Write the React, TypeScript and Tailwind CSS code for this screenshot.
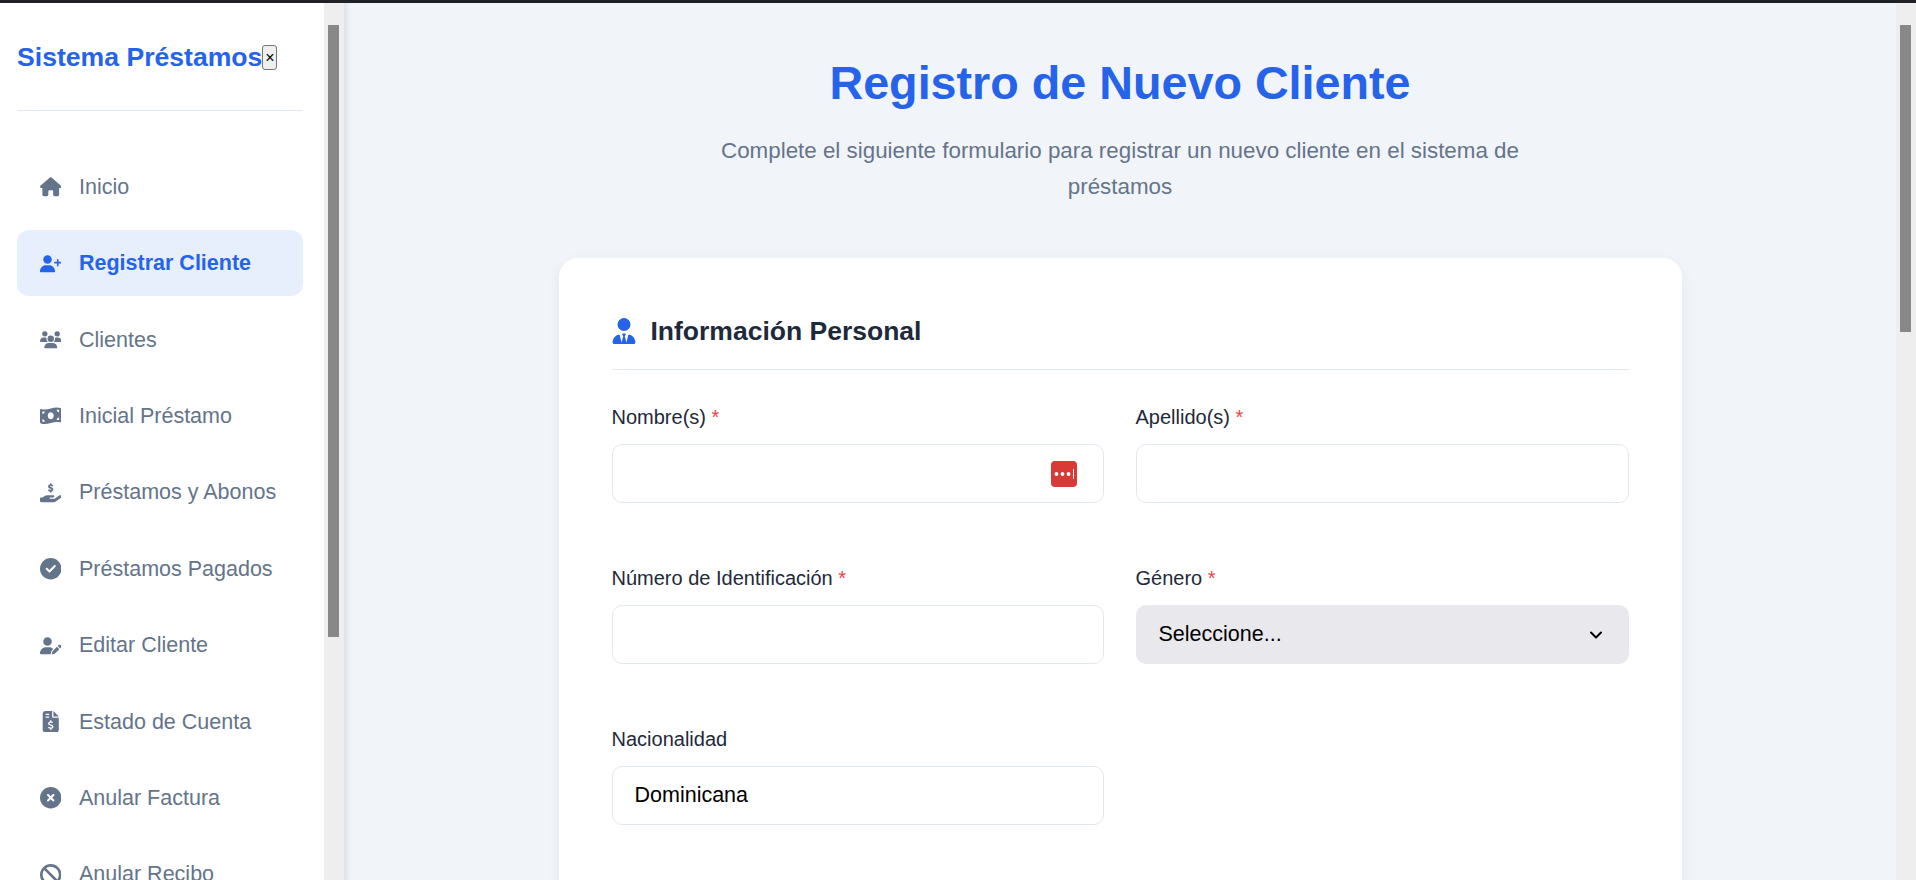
import {
  FaHouse,
  FaUserPlus,
  FaUsers,
  FaMoneyBillWave,
  FaHandHoldingDollar,
  FaCircleCheck,
  FaUserPen,
  FaFileInvoiceDollar,
  FaCircleXmark,
  FaBan,
  FaUserTie,
} from "react-icons/fa6"

const menu = [
  { label: "Inicio", icon: FaHouse },
  { label: "Registrar Cliente", icon: FaUserPlus, active: true },
  { label: "Clientes", icon: FaUsers },
  { label: "Inicial Préstamo", icon: FaMoneyBillWave },
  { label: "Préstamos y Abonos", icon: FaHandHoldingDollar },
  { label: "Préstamos Pagados", icon: FaCircleCheck },
  { label: "Editar Cliente", icon: FaUserPen },
  { label: "Estado de Cuenta", icon: FaFileInvoiceDollar },
  { label: "Anular Factura", icon: FaCircleXmark },
  { label: "Anular Recibo", icon: FaBan },
]

function Scrollbar({ thumb }: { thumb: string }) {
  return (
    <div className="w-[20px] shrink-0 bg-[#eeeeee] pt-[22px] pl-[4px]">
      <div className={`w-[11px] bg-[#888888] ${thumb}`} />
    </div>
  )
}

function Label({ text, required }: { text: string; required?: boolean }) {
  return (
    <label className="block h-[27px] text-[20px] leading-[27px] text-[#1e293b] mb-[13px]">
      {text}
      {required && <span className="text-[#ef4444]"> *</span>}
    </label>
  )
}

function PasswordIcon() {
  return (
    <div className="absolute right-[27px] top-[17px] w-[26px] h-[26px] rounded-[4px] bg-[#d93a36]">
      <svg viewBox="0 0 26 26" className="w-[26px] h-[26px]">
        <circle cx="5.5" cy="13" r="1.9" fill="#fff" />
        <circle cx="11.5" cy="13" r="1.9" fill="#fff" />
        <circle cx="17.5" cy="13" r="1.9" fill="#fff" />
        <rect x="22" y="8" width="1" height="10" fill="#fff" />
      </svg>
    </div>
  )
}

export default function App() {
  return (
    <div className="h-[880px] w-[1916px] overflow-hidden flex flex-col font-['Liberation_Sans',Arial,sans-serif]">
      <div className="h-[3px] shrink-0 bg-[#202124]" />
      <div className="flex flex-1 min-h-0">
        <aside className="w-[324px] shrink-0 bg-white pl-[17px] pr-[21px] overflow-hidden">
          <div className="flex items-center h-[108px] border-b border-[#e2e8f0] pt-[2px]">
            <span className="text-[26.6px] font-bold text-[#2563eb] leading-none whitespace-nowrap">Sistema Préstamos</span>
            <button className="w-[15px] h-[25px] shrink-0 flex items-center justify-center rounded-[3px] border border-[#767676] bg-[#efefef] text-[16px] leading-none text-black">
              ×
            </button>
          </div>
          <nav className="mt-[43px] flex flex-col gap-[10.4px]">
            {menu.map((item) => {
              const Icon = item.icon
              return (
                <div
                  key={item.label}
                  className={`flex items-center h-[66px] shrink-0 rounded-[12px] pl-[20px] text-[21.5px] ${
                    item.active ? "bg-[#e8effc] text-[#2563eb] font-bold" : "text-[#64748b]"
                  }`}
                >
                  <span className="w-[42px] shrink-0 flex items-center">
                    <span className="w-[27px] flex justify-center">
                      <Icon className="text-[21.5px]" />
                    </span>
                  </span>
                  <span className="whitespace-nowrap">{item.label}</span>
                </div>
              )
            })}
          </nav>
        </aside>
        <Scrollbar thumb="h-[612px]" />
        <main className="flex-1 min-w-0 bg-[#f1f5f9] shadow-[inset_7px_0_6px_-5px_rgba(0,0,0,0.1)] overflow-hidden">
          <div className="text-center pt-[49px]">
            <h1 className="text-[46.7px] font-bold text-[#2563eb] leading-[62px]">Registro de Nuevo Cliente</h1>
            <p className="mx-auto mt-[19px] w-[860px] text-[22.36px] leading-[35.5px] text-[#64748b]">
              Complete el siguiente formulario para registrar un nuevo cliente en el sistema de préstamos
            </p>
          </div>
          <section className="mx-auto mt-[54px] w-[1123px] rounded-t-[19px] bg-white px-[53px] pt-[57px] h-[700px] shadow-[0_4px_14px_rgba(0,0,0,0.06)]">
            <div className="flex items-center gap-[15px] h-[32px] mb-[22px] text-[26.5px] font-bold text-[#1e293b]">
              <FaUserTie className="text-[#2563eb] text-[26px] w-[24px]" />
              <h2 className="leading-none">Información Personal</h2>
            </div>
            <div className="h-px bg-[#e2e8f0] mb-[34px]" />
            <div className="grid grid-cols-[492px_493px] gap-x-[32px] gap-y-[62px]">
              <div>
                <Label text="Nombre(s)" required />
                <div className="relative">
                  <input className="w-full h-[59px] rounded-[10px] border border-[#e2e8f0] bg-white outline-none" />
                  <PasswordIcon />
                </div>
              </div>
              <div>
                <Label text="Apellido(s)" required />
                <input className="w-full h-[59px] rounded-[10px] border border-[#e2e8f0] bg-white outline-none" />
              </div>
              <div>
                <Label text="Número de Identificación" required />
                <input className="w-full h-[59px] rounded-[10px] border border-[#e2e8f0] bg-white outline-none" />
              </div>
              <div>
                <Label text="Género" required />
                <div className="flex items-center justify-between h-[59px] rounded-[10px] bg-[#e9e9ed] pl-[23px] pr-[25px] text-[21.5px] text-black">
                  <span>Seleccione...</span>
                  <svg viewBox="0 0 16 16" className="w-[16px] h-[16px]" fill="none" stroke="#000" strokeWidth="2" strokeLinecap="round" strokeLinejoin="round">
                    <path d="M3 5.5l5 5 5-5" />
                  </svg>
                </div>
              </div>
              <div>
                <Label text="Nacionalidad" />
                <input
                  defaultValue="Dominicana"
                  className="w-full h-[59px] rounded-[10px] border border-[#e2e8f0] bg-white px-[22px] text-[21.5px] text-black outline-none"
                />
              </div>
            </div>
          </section>
        </main>
        <Scrollbar thumb="h-[307px]" />
      </div>
    </div>
  )
}
